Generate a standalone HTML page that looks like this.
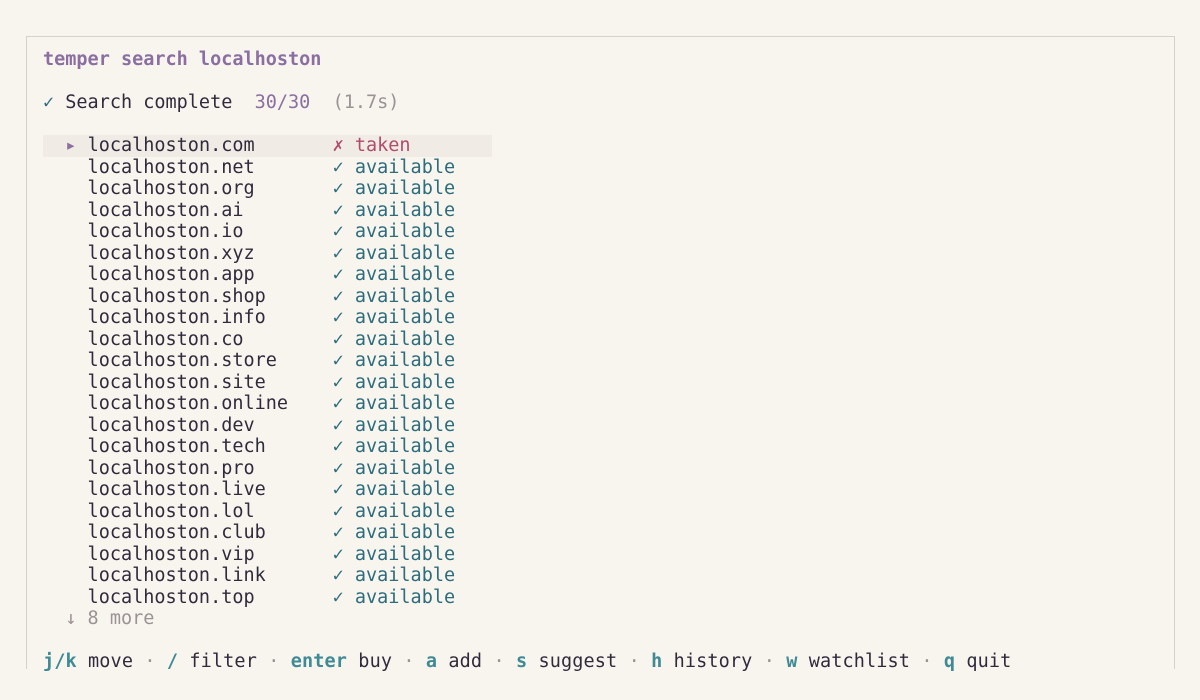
<!DOCTYPE html>
<html><head><meta charset="utf-8"><style>
html,body{margin:0;padding:0;background:#f8f4ee;width:1200px;height:700px;overflow:hidden}
.box{position:absolute;left:26px;top:36px;width:1147px;height:632px;border:1px solid #d6d1cc;border-bottom:none;background:#f8f4ee}
.t{position:absolute;left:16px;top:12px;font-family:"DejaVu Sans Mono","Liberation Mono",monospace;font-size:18.5px;line-height:21.5px;color:#2f2b3c;white-space:pre}
.l{height:21.5px}
.p{color:#8a6fa0}
.b{font-weight:bold}
.g{color:#9a9294}
.a{color:#2c6c7c}
.r{color:#b04c6c}
.k{color:#3f8a95;font-weight:bold}
.hl{background:#f0ebe4;width:449px}
.f{letter-spacing:0.12px}
</style></head><body>
<div class="box"><div class="t"><div class="l p b">temper search localhoston</div><div class="l"></div><div class="l"><span class="a">✓</span> Search complete  <span class="p">30/30</span>  <span class="g">(1.7s)</span></div><div class="l"></div><div class="l hl"><span class="p">  ▸ </span>localhoston.com       <span class="r">✗ taken</span></div><div class="l">    localhoston.net       <span class="a">✓ available</span></div><div class="l">    localhoston.org       <span class="a">✓ available</span></div><div class="l">    localhoston.ai        <span class="a">✓ available</span></div><div class="l">    localhoston.io        <span class="a">✓ available</span></div><div class="l">    localhoston.xyz       <span class="a">✓ available</span></div><div class="l">    localhoston.app       <span class="a">✓ available</span></div><div class="l">    localhoston.shop      <span class="a">✓ available</span></div><div class="l">    localhoston.info      <span class="a">✓ available</span></div><div class="l">    localhoston.co        <span class="a">✓ available</span></div><div class="l">    localhoston.store     <span class="a">✓ available</span></div><div class="l">    localhoston.site      <span class="a">✓ available</span></div><div class="l">    localhoston.online    <span class="a">✓ available</span></div><div class="l">    localhoston.dev       <span class="a">✓ available</span></div><div class="l">    localhoston.tech      <span class="a">✓ available</span></div><div class="l">    localhoston.pro       <span class="a">✓ available</span></div><div class="l">    localhoston.live      <span class="a">✓ available</span></div><div class="l">    localhoston.lol       <span class="a">✓ available</span></div><div class="l">    localhoston.club      <span class="a">✓ available</span></div><div class="l">    localhoston.vip       <span class="a">✓ available</span></div><div class="l">    localhoston.link      <span class="a">✓ available</span></div><div class="l">    localhoston.top       <span class="a">✓ available</span></div><div class="l g">  ↓ 8 more</div><div class="l"></div><div class="l f"><span class="k">j/k</span> move <span class="g">·</span> <span class="k">/</span> filter <span class="g">·</span> <span class="k">enter</span> buy <span class="g">·</span> <span class="k">a</span> add <span class="g">·</span> <span class="k">s</span> suggest <span class="g">·</span> <span class="k">h</span> history <span class="g">·</span> <span class="k">w</span> watchlist <span class="g">·</span> <span class="k">q</span> quit</div></div></div>
</body></html>
